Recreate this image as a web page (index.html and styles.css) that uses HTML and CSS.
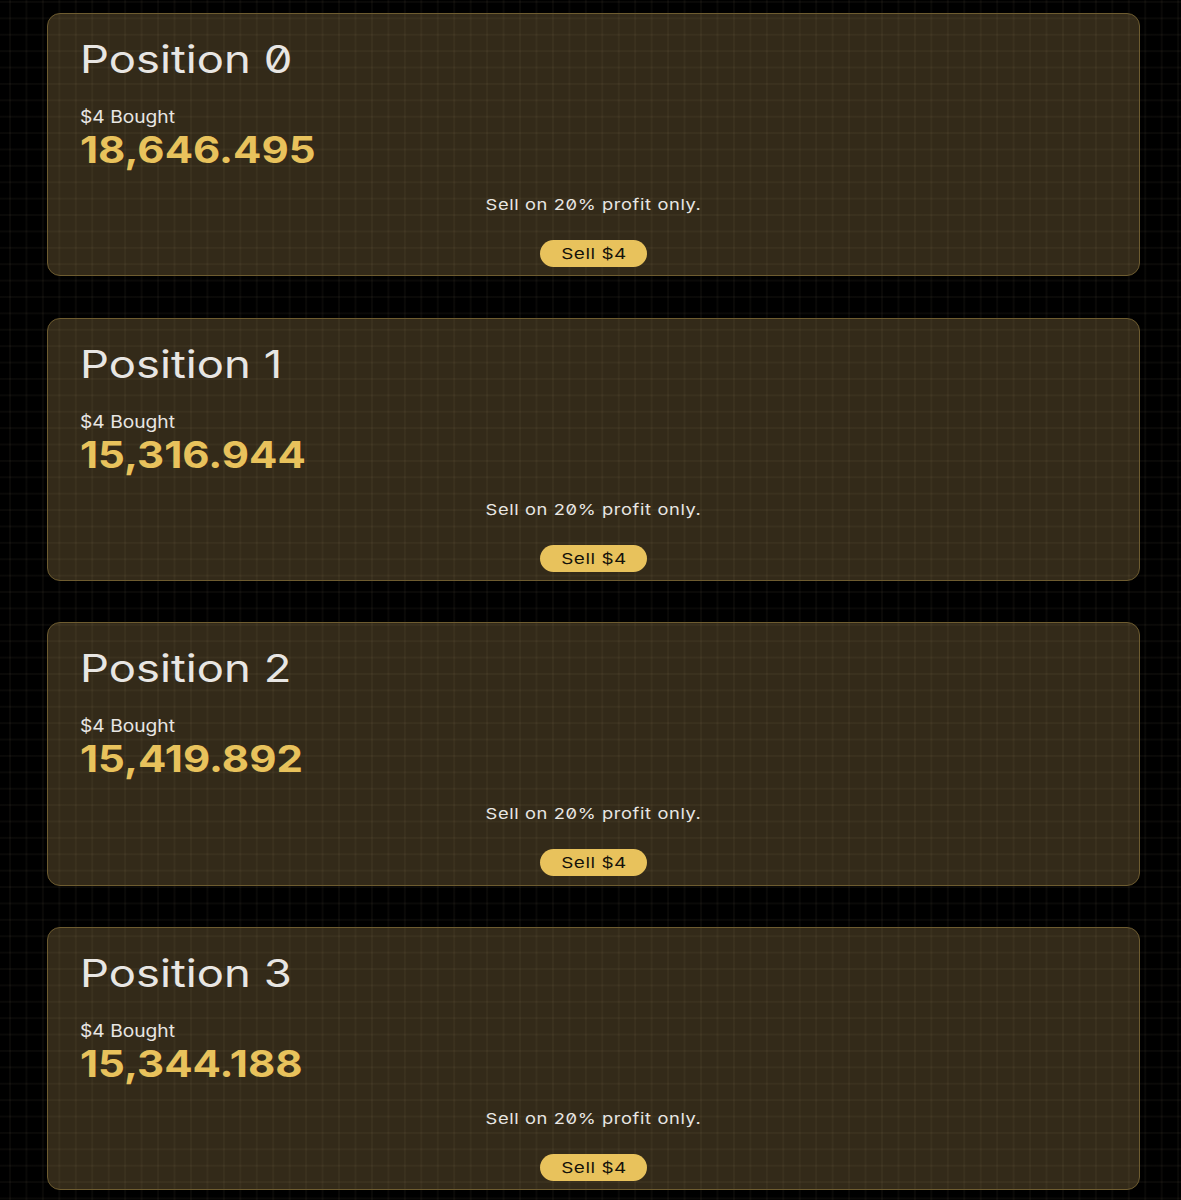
FILE: index.html
```html
<!DOCTYPE html>
<html lang="en">
  <head>
    <meta charset="UTF-8" />
    <title>Positions</title>
    <link rel="stylesheet" href="styles.css">
  </head>
  <body>
    <div class="positions">
      <div class="position-card">
        <h2 class="position-title">Position 0</h2>
        <div class="bought-label">$4 Bought</div>
        <div class="bought-amount">18,646.495</div>
        <p class="sell-note">Sell on 20% profit only.</p>
        <button class="sell-button"><span>Sell $4</span></button>
      </div>
      <div class="position-card">
        <h2 class="position-title">Position 1</h2>
        <div class="bought-label">$4 Bought</div>
        <div class="bought-amount">15,316.944</div>
        <p class="sell-note">Sell on 20% profit only.</p>
        <button class="sell-button"><span>Sell $4</span></button>
      </div>
      <div class="position-card">
        <h2 class="position-title">Position 2</h2>
        <div class="bought-label">$4 Bought</div>
        <div class="bought-amount">15,419.892</div>
        <p class="sell-note">Sell on 20% profit only.</p>
        <button class="sell-button"><span>Sell $4</span></button>
      </div>
      <div class="position-card">
        <h2 class="position-title">Position 3</h2>
        <div class="bought-label">$4 Bought</div>
        <div class="bought-amount">15,344.188</div>
        <p class="sell-note">Sell on 20% profit only.</p>
        <button class="sell-button"><span>Sell $4</span></button>
      </div>
    </div>
  </body>
</html>
```

FILE: styles.css
```css
* {
  margin: 0;
  padding: 0;
  box-sizing: border-box;
}

body {
  background-color: #000;
  background-image:
    linear-gradient(rgba(255, 235, 190, 0.04) 2px, transparent 2px),
    linear-gradient(90deg, rgba(255, 235, 190, 0.04) 2px, transparent 2px);
  background-size: 16.46px 16.4px;
  background-position: 9px 1px;
  font-family: Inter, "Liberation Sans", sans-serif;
  font-feature-settings: "zero" 1;
  color: #e8e6e3;
}

.positions {
  display: flex;
  flex-direction: column;
  gap: 41.4px;
  padding: 13px 41px 10px 47px;
}

.position-card {
  display: flex;
  flex-direction: column;
  height: 263.3px;
  padding: 22px 32px 0;
  background-color: rgba(240, 200, 120, 0.21);
  border: 1px solid #6e5c30;
  border-radius: 13px;
}

/* the wide look of the headings comes from stretching the text */
.position-title,
.bought-label,
.bought-amount {
  align-self: flex-start;
  transform-origin: left;
}

.position-title {
  font-size: 38px;
  line-height: 46px;
  font-weight: 400;
  transform: scaleX(1.195);
}

.bought-label {
  margin-top: 24px;
  font-size: 17px;
  line-height: 22px;
  transform: scaleX(1.13);
}

.bought-amount {
  font-size: 37px;
  line-height: 44px;
  font-weight: 700;
  color: #e8c25c;
  transform: scaleX(1.135);
}

.sell-note {
  align-self: center;
  margin-top: 23px;
  font-size: 15px;
  line-height: 20px;
  letter-spacing: 0.5px;
  transform: scaleX(1.22);
}

.sell-button {
  align-self: center;
  width: 107px;
  height: 27px;
  margin-top: 25px;
  border: none;
  border-radius: 14px;
  background: #e8c25c;
  color: #15120a;
  font-family: inherit;
  font-feature-settings: inherit;
  font-size: 15px;
  letter-spacing: 0.4px;
}

.sell-button span {
  display: inline-block;
  transform: scaleX(1.26);
}
```
